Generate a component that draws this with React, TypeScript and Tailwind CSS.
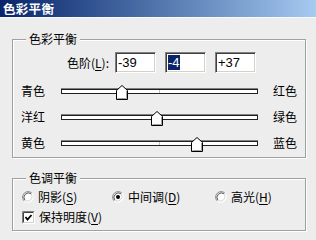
import React from "react";

const font = "font-['Noto_Sans_CJK_SC','Noto_Sans',sans-serif]";

function U({ children }: { children: React.ReactNode }) {
  return <span className="underline underline-offset-[2px]">{children}</span>;
}

function Thumb() {
  return (
    <svg width="12" height="15" viewBox="0 0 12 15">
      <path d="M0.5 14.5V5.5L6 0.5L11.5 5.5V14.5Z" fill="#fff" stroke="#000" />
      <path d="M10.5 6V13.5H1.5" fill="none" stroke="#a0a0a0" />
    </svg>
  );
}

function Slider({ left, right, value }: { left: string; right: string; value: number }) {
  const pos = 98.5 + (value / 100) * 98.5;
  return (
    <div className="flex items-center h-[26px] pl-[8px]">
      <span className="w-[40px]">{left}</span>
      <div className="relative w-[197px] h-[5px] border border-[#202020] bg-white shadow-[0_-1px_0_#808080]">
        <div className="absolute left-[97px] top-0 w-px h-[3px] bg-[#c0c0c0]" />
        <div className="absolute -top-[5px]" style={{ left: pos - 6 }}>
          <Thumb />
        </div>
      </div>
      <span className="ml-[15px]">{right}</span>
    </div>
  );
}

function Field({ value, selected }: { value: string; selected?: boolean }) {
  return (
    <div className="w-[41px] h-[21px] border border-[#808080] border-b-white border-r-white shadow-[inset_1px_1px_0_#404040,inset_-1px_-1px_0_#d4d0c8] bg-white flex items-center pl-[2px] font-['Liberation_Sans',sans-serif] text-[13px]">
      <span className={selected ? "bg-[#0a246a] text-white leading-[15px]" : "leading-[15px]"}>{value}</span>
    </div>
  );
}

function Radio({ checked }: { checked?: boolean }) {
  return (
    <svg width="12" height="12" viewBox="0 0 12 12">
      <circle cx="6" cy="6" r="5" fill="#fff" />
      <path d="M1.76 10.24A6 6 0 0 1 10.24 1.76" transform="translate(6 6) scale(0.92) translate(-6 -6)" fill="none" stroke="#808080" />
      <path d="M2.5 9.5A5 5 0 0 1 9.5 2.5" fill="none" stroke="#404040" transform="translate(6 6) scale(0.9) translate(-6 -6)" />
      <path d="M1.76 10.24A6 6 0 0 0 10.24 1.76" transform="translate(6 6) scale(0.92) translate(-6 -6)" fill="none" stroke="#fff" />
      <path d="M2.5 9.5A5 5 0 0 0 9.5 2.5" fill="none" stroke="#d4d0c8" transform="translate(6 6) scale(0.9) translate(-6 -6)" />
      {checked && <circle cx="6" cy="6" r="2" fill="#000" />}
    </svg>
  );
}

function Check() {
  return (
    <svg width="13" height="13" viewBox="0 0 13 13">
      <rect x="0" y="0" width="13" height="13" fill="#fff" />
      <path d="M0.5 12.5V0.5H12.5" fill="none" stroke="#808080" />
      <path d="M1.5 11.5V1.5H11.5" fill="none" stroke="#404040" />
      <path d="M0.5 12.5H12.5V0.5" fill="none" stroke="#fff" />
      <path d="M1.5 11.5H11.5V1.5" fill="none" stroke="#d4d0c8" />
      <path d="M3.5 6L5.5 8.5L9.5 4" fill="none" stroke="#000" strokeWidth="1.8" />
    </svg>
  );
}

export default function App() {
  return (
    <div className={`w-[316px] h-[240px] bg-[#ededed] overflow-hidden text-[12px] text-black ${font}`}>
      <div className="h-[17px] bg-linear-to-r from-[#0a246a] to-[#a6caf0] text-white font-bold text-[12.5px] leading-[17px] pl-[3px] tracking-[0.3px]">
        色彩平衡
      </div>
      <div className="h-px bg-[#fafafa]" />

      <div className="relative mt-[21px] ml-[12px] w-[294px] h-[119px] border border-[#a0a0a0] shadow-[1px_1px_0_#fff,inset_1px_1px_0_#fff]">
        <span className="absolute left-[13px] -top-[9px] px-[3px] leading-[16px] bg-[#ededed]">色彩平衡</span>
        <div className="flex items-center pt-[12px]">
          <span className="w-[96px] text-right">
            色阶(<U>L</U>):
          </span>
          <div className="flex gap-[9px] ml-[6px]">
            <Field value="-39" />
            <Field value="-4" selected />
            <Field value="+37" />
          </div>
        </div>
        <div className="mt-[5px]">
          <Slider left="青色" right="红色" value={-39} />
          <Slider left="洋红" right="绿色" value={-4} />
          <Slider left="黄色" right="蓝色" value={37} />
        </div>
      </div>

      <div className="relative mt-[20px] ml-[12px] w-[294px] h-[53px] border border-[#a0a0a0] shadow-[1px_1px_0_#fff,inset_1px_1px_0_#fff]">
        <span className="absolute left-[13px] -top-[9px] px-[3px] leading-[16px] bg-[#ededed]">色调平衡</span>
        <div className="flex items-center h-[16px] mt-[10px] pl-[9px]">
          <div className="flex items-center gap-[4px] w-[90px]">
            <Radio />
            <span>
              阴影(<U>S</U>)
            </span>
          </div>
          <div className="flex items-center gap-[4px] w-[103px]">
            <Radio checked />
            <span>
              中间调(<U>D</U>)
            </span>
          </div>
          <div className="flex items-center gap-[4px]">
            <Radio />
            <span>
              高光(<U>H</U>)
            </span>
          </div>
        </div>
        <div className="flex items-center gap-[4px] h-[16px] mt-[4px] pl-[9px]">
          <Check />
          <span>
            保持明度(<U>V</U>)
          </span>
        </div>
      </div>
    </div>
  );
}
